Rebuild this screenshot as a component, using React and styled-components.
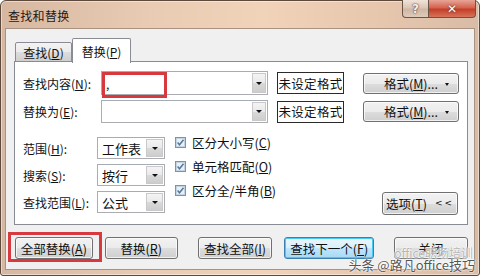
import React from 'react';
import styled, { createGlobalStyle } from 'styled-components';

const Global = createGlobalStyle`
  html, body { margin: 0; padding: 0; background: #fff; }
  body {
    width: 484px; height: 279px; overflow: hidden;
    font-family: "Noto Sans CJK SC", "Noto Sans", sans-serif;
    font-size: 12px; color: #111;
  }
  u { text-decoration: underline; text-underline-offset: 1px; }
`;

const Win = styled.div`
  position: relative;
  width: 480px;
  height: 276px;
  box-sizing: border-box;
  border: 1px solid #5e4a3c;
  border-radius: 6px 6px 3px 3px;
  background: linear-gradient(90deg, #d6b8a2 0%, #e9cbb3 30%, #f1d3ba 55%, #e6c6ad 80%, #d9bca6 100%);
  display: flex;
  flex-direction: column;
  box-shadow: inset 0 0 0 1px rgba(255,255,255,0.45);
`;

const TitleBar = styled.div`
  height: 27px;
  display: flex;
  align-items: flex-start;
  padding-left: 7px;
  padding-right: 3px;
`;

const Title = styled.div`
  margin-top: 6px;
  font-size: 12px;
  color: #1a1a1a;
  letter-spacing: 0.3px;
`;

const Caption = styled.div`
  margin-left: auto;
  display: flex;
  margin-top: -1px;
`;

const CapBtn = styled.div`
  width: ${p => p.w}px;
  height: 18px;
  box-sizing: border-box;
  border: 1px solid #6b5446;
  border-top: none;
  border-left: ${p => p.red ? 'none' : '1px solid #6b5446'};
  display: flex;
  align-items: center;
  justify-content: center;
  font-family: "DejaVu Sans", sans-serif;
  font-weight: bold;
  font-size: 12px;
  background: ${p => p.red
    ? 'linear-gradient(180deg, #e7a596 0%, #d5644f 45%, #c43f27 55%, #d8735c 100%)'
    : 'linear-gradient(180deg, #f1e3d8 0%, #dcc6b7 45%, #cfb6a5 55%, #dfcabb 100%)'};
  border-radius: ${p => p.red ? '0 0 4px 0' : '0 0 0 4px'};
  text-shadow: 0 0 2px #5a3a30, 0 0 1px #5a3a30;
  color: ${p => p.red ? '#fff' : '#f7f0ea'};
`;

const Client = styled.div`
  flex: 1;
  margin: 0 4px 5px 4px;
  background: #f0f0f0;
  border: 1px solid #a89282;
  padding: 9px 6px 0 8px;
  display: flex;
  flex-direction: column;
`;

const TabRow = styled.div`
  display: flex;
  align-items: flex-end;
  height: 24px;
  margin-left: 1px;
  position: relative;
  z-index: 2;
`;

const Tab = styled.div`
  box-sizing: border-box;
  height: ${p => p.active ? 25 : 20}px;
  width: ${p => p.active ? 59 : 57}px;
  border: 1px solid #898c95;
  border-bottom: ${p => p.active ? 'none' : '1px solid #898c95'};
  border-radius: 2px 2px 0 0;
  background: ${p => p.active
    ? '#fff'
    : 'linear-gradient(180deg, #f3f3f3 0%, #ebebeb 50%, #dddddd 51%, #cfcfcf 100%)'};
  display: flex;
  align-items: center;
  justify-content: center;
  padding-top: ${p => p.active ? 0 : 1}px;
  margin-bottom: ${p => p.active ? -1 : 0}px;
`;

const Panel = styled.div`
  box-sizing: border-box;
  height: 164px;
  margin-top: -1px;
  border: 1px solid #898c95;
  background: #fff;
  padding: 9px 8px 0 8px;
  display: flex;
  flex-direction: column;
`;

const TopGrid = styled.div`
  display: grid;
  grid-template-columns: 78px 167px 76px 96px;
  row-gap: 5px;
  align-items: center;
  & > :nth-child(4n+3) { margin-left: 9px; }
  & > :nth-child(4n+4) { margin-left: 19px; }
`;

const Label = styled.div`
  white-space: nowrap;
  width: ${p => p.w || 'auto'}px;
  flex-shrink: 0;
`;

const Combo = styled.div`
  position: relative;
  box-sizing: border-box;
  width: ${p => p.w}px;
  height: ${p => p.h}px;
  border: 1px solid #abadb3;
  border-top-color: #a5acb5;
  background: #fff;
  display: flex;
  align-items: stretch;
`;

const ComboText = styled.div`
  flex: 1;
  display: flex;
  align-items: center;
  padding-left: 4px;
  white-space: nowrap;
  font-size: ${p => p.big ? 13 : 12}px;
`;

const DropSeg = styled.div`
  width: ${p => p.w}px;
  box-sizing: border-box;
  margin: 1px;
  border: 1px solid #c9c9c9;
  background: linear-gradient(180deg, #f4f4f4 0%, #e9e9e9 50%, #d9d9d9 51%, #cdcdcd 100%);
  display: flex;
  align-items: center;
  justify-content: center;
`;

const Arrow = styled.div`
  width: 0; height: 0;
  border-left: 3px solid transparent;
  border-right: 3px solid transparent;
  border-top: 3px solid #111;
`;

const Highlight = styled.div`
  position: absolute;
  left: ${p => p.l}px;
  top: ${p => p.t}px;
  width: ${p => p.w}px;
  height: ${p => p.h}px;
  box-sizing: border-box;
  border: 3px solid #d6393e;
  pointer-events: none;
  z-index: 3;
`;

const FormatBox = styled.div`
  box-sizing: border-box;
  height: 22px;
  border: 1px solid #2a2a2a;
  display: flex;
  align-items: center;
  justify-content: center;
  font-size: 12.5px;
  letter-spacing: 0.3px;
`;

const Button = styled.div`
  position: relative;
  box-sizing: border-box;
  width: ${p => p.w}px;
  height: ${p => p.h || 22}px;
  border: 1px solid ${p => p.def ? '#3c7fb1' : '#707070'};
  border-radius: 3px;
  background: ${p => p.def
    ? 'linear-gradient(180deg, #eaf6fd 0%, #d9f0fc 50%, #bee6fd 51%, #a7d9f5 100%)'
    : 'linear-gradient(180deg, #f2f2f2 0%, #ebebeb 50%, #dddddd 51%, #cfcfcf 100%)'};
  box-shadow: inset 0 0 0 1px ${p => p.def ? '#48c8f4' : 'rgba(255,255,255,0.7)'};
  display: flex;
  align-items: center;
  justify-content: center;
  gap: ${p => p.gap || 0}px;
  white-space: nowrap;
  margin-left: ${p => p.ml || 0}px;
  font-size: 12.5px;
`;

const SmallArrow = styled(Arrow)`
  position: absolute;
  right: 9px;
  top: 9px;
  border-left-width: 2.5px;
  border-right-width: 2.5px;
  border-top-width: 3px;
`;

const Lower = styled.div`
  display: flex;
  margin-top: 14px;
`;

const SelCol = styled.div`
  display: flex;
  flex-direction: column;
  gap: 5px;
`;

const SelRow = styled.div`
  display: flex;
  align-items: center;
`;

const CheckCol = styled.div`
  display: flex;
  flex-direction: column;
  margin-left: 10px;
  margin-top: -7px;
`;

const CheckRow = styled.div`
  height: 24px;
  display: flex;
  align-items: center;
  gap: 6px;
  font-size: 12.5px;
  white-space: nowrap;
`;

const Options = styled(Button)`
  margin-left: auto;
  align-self: flex-end;
  margin-bottom: -2px;
  margin-right: 1px;
`;

const Chevrons = styled.span`
  font-size: 9px;
  letter-spacing: 2px;
  font-family: "DejaVu Sans", sans-serif;
  margin-top: -1px;
`;

const BottomRow = styled.div`
  display: flex;
  margin-top: 12px;
  padding-left: 1px;
`;

const Watermark = styled.div`
  position: absolute;
  right: ${p => p.r}px;
  bottom: ${p => p.b}px;
  font-size: ${p => p.fs}px;
  color: ${p => p.c};
  white-space: nowrap;
  text-shadow: 0 0 2px #fff, 0 0 2px #fff, 0 0 1px #fff;
  z-index: 5;
  pointer-events: none;
`;

const Check = () => (
  <svg width="11" height="11" viewBox="0 0 11 11">
    <rect x="0.5" y="0.5" width="10" height="10" fill="#dbe9f4" stroke="#8e8f8f" />
    <rect x="1.5" y="1.5" width="8" height="8" fill="#e9f1f8" stroke="#c3d3e2" />
    <path d="M2.6 5.6 L4.5 7.8 L8.5 2.7" fill="none" stroke="#52779b" strokeWidth="1.5" />
  </svg>
);

const Select = ({ text }) => (
  <Combo w={68} h={22}>
    <ComboText big>{text}</ComboText>
    <DropSeg w={17}><Arrow /></DropSeg>
  </Combo>
);

export default function App() {
  return (
    <>
      <Global />
      <Win>
        <TitleBar>
          <Title>查找和替换</Title>
          <Caption>
            <CapBtn w={27}>?</CapBtn>
            <CapBtn w={47} red>✕</CapBtn>
          </Caption>
        </TitleBar>
        <Client>
          <TabRow>
            <Tab>查找(<u>D</u>)</Tab>
            <Tab active>替换(<u>P</u>)</Tab>
          </TabRow>
          <Panel>
            <TopGrid>
              <Label>查找内容(<u>N</u>):</Label>
              <Combo w={167} h={24}>
                <ComboText>,</ComboText>
                <DropSeg w={14}><Arrow /></DropSeg>
                <Highlight l={0} t={0} w={65} h={26} />
              </Combo>
              <FormatBox>未设定格式</FormatBox>
              <Button w={96} h={21}><span>格式(<u>M</u>)...</span><SmallArrow /></Button>

              <Label>替换为(<u>E</u>):</Label>
              <Combo w={167} h={23}>
                <ComboText />
                <DropSeg w={14}><Arrow /></DropSeg>
              </Combo>
              <FormatBox>未设定格式</FormatBox>
              <Button w={96} h={21}><span>格式(<u>M</u>)...</span><SmallArrow /></Button>
            </TopGrid>

            <Lower>
              <SelCol>
                <SelRow>
                  <Label w={74}>范围(<u>H</u>):</Label>
                  <Select text="工作表" />
                </SelRow>
                <SelRow>
                  <Label w={74}>搜索(<u>S</u>):</Label>
                  <Select text="按行" />
                </SelRow>
                <SelRow>
                  <Label w={74}>查找范围(<u>L</u>):</Label>
                  <Select text="公式" />
                </SelRow>
              </SelCol>
              <CheckCol>
                <CheckRow><Check /><span>区分大小写(<u>C</u>)</span></CheckRow>
                <CheckRow><Check /><span>单元格匹配(<u>O</u>)</span></CheckRow>
                <CheckRow><Check /><span>区分全/半角(<u>B</u>)</span></CheckRow>
              </CheckCol>
              <Options w={76} h={23} gap={8}>
                <span>选项(<u>T</u>)</span>
                <Chevrons>&lt;&lt;</Chevrons>
              </Options>
            </Lower>
          </Panel>

          <BottomRow>
            <Button w={78}>
              <span>全部替换(<u>A</u>)</span>
              <Highlight l={-8} t={-6} w={94} h={30} />
            </Button>
            <Button w={73} ml={12}><span>替换(<u>R</u>)</span></Button>
            <Button w={75} ml={20}><span>查找全部(<u>I</u>)</span></Button>
            <Button w={90} ml={12} def><span>查找下一个(<u>F</u>)</span></Button>
            <Button w={74} ml={20}>关闭</Button>
          </BottomRow>
        </Client>
        <Watermark r={6} b={14} fs={12} c="rgba(120,120,120,0.55)">office职场培训</Watermark>
        <Watermark r={4} b={1} fs={13} c="rgba(40,40,40,0.8)">头条 @路凡office技巧</Watermark>
      </Win>
    </>
  );
}
